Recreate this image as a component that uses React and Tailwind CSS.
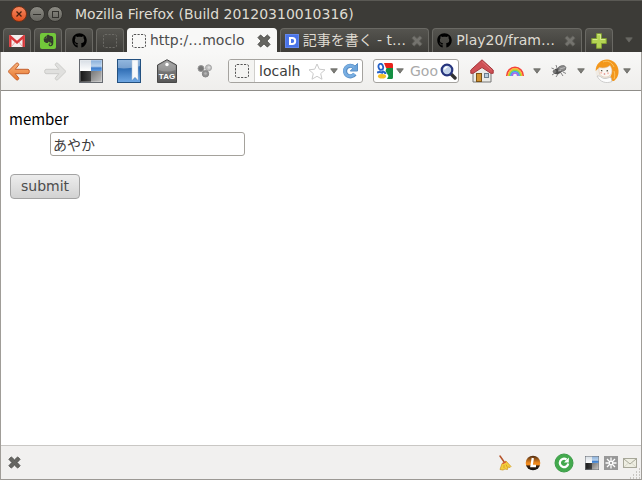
import { useState } from "react";
import { FaEvernote, FaGithub } from "react-icons/fa";

function CrossIcon({ size = 14, fill = "#666662", stroke = "#4a4a47" }) {
  return (
    <svg width={size} height={size} viewBox="0 0 14 14" aria-hidden>
      <path
        d="M3.600 1 7 4.200 10.400 1 13 3.600 9.800 7 13 10.400 10.400 13 7 9.800 3.600 13 1 10.400 4.200 7 1 3.600Z"
        fill={fill}
        stroke={stroke}
        strokeLinejoin="round"
      />
    </svg>
  );
}

function GmailIcon() {
  return (
    <svg width="16" height="12" viewBox="0 0 16 12" aria-hidden>
      <rect width="16" height="12" rx="1" fill="#f3efee" />
      <path d="M3 11 6.500 6.500M13 11 9.500 6.500" stroke="#e7a9a4" />
      <path d="M1.300 12V1.500L8 7.500l6.700-6V12" fill="none" stroke="#d8383a" strokeWidth="2.400" />
    </svg>
  );
}

function BlankPageIcon({ stroke = "#555" }) {
  return (
    <svg width="14" height="14" viewBox="0 0 14 14" aria-hidden>
      <rect x="0.500" y="0.500" width="13" height="13" rx="1.500" fill="none" stroke={stroke} strokeDasharray="2.200 1.300" />
    </svg>
  );
}

function DocIcon() {
  return (
    <svg width="14" height="14" viewBox="0 0 14 14" aria-hidden>
      <rect width="14" height="14" fill="#4a74e8" />
      <rect x="0.500" y="0.500" width="13" height="13" fill="none" stroke="#6288ee" />
      <path d="M5 4h2.200a3 3 0 0 1 0 6H5Z" fill="none" stroke="#fff" strokeWidth="2" />
    </svg>
  );
}

function ArrowIcon({ forward }) {
  return (
    <svg width="22" height="19" viewBox="0 0 22 19" className={forward ? "rotate-180" : ""} aria-hidden>
      <defs>
        <linearGradient id="backFill" x1="0" y1="0" x2="0" y2="1">
          <stop offset="0" stopColor="#f7b27c" />
          <stop offset="1" stopColor="#e8762c" />
        </linearGradient>
      </defs>
      <path
        d="M8.300 1.200c1-1 3.200.800 2.300 2L7.200 7.300H20c1.800 0 1.800 4.400 0 4.400H7.200l3.400 4.100c.9 1.200-1.300 3-2.300 2L.8 10.300c-.5-.500-.5-1.100 0-1.600Z"
        fill={forward ? "#e0e0de" : "url(#backFill)"}
        stroke={forward ? "#cbcbc8" : "#c4602c"}
      />
    </svg>
  );
}

function DeliciousIcon({ size = 24 }) {
  return (
    <svg width={size} height={size} viewBox="0 0 24 24" aria-hidden>
      <defs>
        <linearGradient id="delBlue" x1="0" y1="0" x2="0" y2="1">
          <stop offset="0" stopColor="#7fa9d8" />
          <stop offset="0.600" stopColor="#b9d2ec" />
          <stop offset="0.750" stopColor="#3d7ccb" />
          <stop offset="1" stopColor="#5e9be0" />
        </linearGradient>
        <linearGradient id="delGray" x1="0" y1="0" x2="1" y2="1">
          <stop offset="0" stopColor="#777" />
          <stop offset="1" stopColor="#c8c8c8" />
        </linearGradient>
        <linearGradient id="delWhite" x1="0" y1="0" x2="0" y2="1">
          <stop offset="0" stopColor="#d3dae2" />
          <stop offset="1" stopColor="#fff" />
        </linearGradient>
        <linearGradient id="delBlack" x1="0" y1="0" x2="1" y2="0">
          <stop offset="0" stopColor="#111" />
          <stop offset="1" stopColor="#444" />
        </linearGradient>
      </defs>
      <rect width="12" height="12" fill="url(#delWhite)" />
      <rect x="12" width="12" height="12" fill="url(#delBlue)" />
      <rect y="12" width="12" height="12" fill="url(#delBlack)" />
      <rect x="12" y="12" width="12" height="12" fill="url(#delGray)" />
      <rect x="0.500" y="0.500" width="23" height="23" fill="none" stroke="#666a70" />
      <rect x="1.500" y="1.500" width="21" height="21" fill="none" stroke="#fff" strokeOpacity="0.250" />
    </svg>
  );
}

function BookmarkIcon() {
  return (
    <svg width="24" height="24" viewBox="0 0 24 24" aria-hidden>
      <defs>
        <linearGradient id="bmBlue" x1="0" y1="0" x2="0" y2="1">
          <stop offset="0" stopColor="#5c94cf" />
          <stop offset="0.400" stopColor="#2f6db4" />
          <stop offset="1" stopColor="#73abe6" />
        </linearGradient>
      </defs>
      <rect width="24" height="24" fill="url(#bmBlue)" />
      <path d="M1 1h22v6C16 9 8 10 1 9Z" fill="#fff" fillOpacity="0.350" />
      <path d="M15 1h6v20l-3-3-3 3Z" fill="#f7f9fb" stroke="#b7c6d6" strokeWidth="0.500" />
      <rect x="0.500" y="0.500" width="23" height="23" fill="none" stroke="#23507f" />
    </svg>
  );
}

function TagIcon() {
  return (
    <svg width="20" height="24" viewBox="0 0 20 24" aria-hidden>
      <defs>
        <linearGradient id="tagFill" x1="0" y1="0" x2="0" y2="1">
          <stop offset="0" stopColor="#999" />
          <stop offset="1" stopColor="#555" />
        </linearGradient>
      </defs>
      <path d="M.500 6 10 .700 19.500 6v17.500H.500Z" fill="url(#tagFill)" stroke="#484848" />
      <path d="M1.500 6.500 10 2l8.500 4.500V11q-8 3-17 0Z" fill="#fff" fillOpacity="0.200" />
      <circle cx="10" cy="5.500" r="1.700" fill="#fff" />
      <text x="10" y="20" textAnchor="middle" fill="#fff" fontFamily="Liberation Sans, sans-serif" fontWeight="700" fontSize="8">
        TAG
      </text>
    </svg>
  );
}

function ClusterIcon() {
  return (
    <svg width="16" height="14" viewBox="0 0 16 14" aria-hidden>
      <circle cx="4" cy="4.500" r="3" fill="#777" stroke="#999" />
      <circle cx="11.500" cy="3.800" r="3" fill="#c0c0c0" stroke="#a5a5a5" />
      <circle cx="8.500" cy="9.800" r="3.200" fill="#929292" stroke="#858585" />
      <circle cx="12" cy="3.500" r="1.300" fill="#ddd" />
      <circle cx="8.500" cy="9.500" r="1.300" fill="#b5b5b5" />
    </svg>
  );
}

function StarIcon() {
  return (
    <svg width="18" height="17" viewBox="0 0 18 17" className="shrink-0" aria-hidden>
      <path
        d="m9 1 2.300 5.200 5.700.600-4.300 3.800 1.300 5.600L9 13.300l-5 2.900 1.300-5.600L1 6.800l5.700-.600Z"
        fill="#fff"
        stroke="#c9c9c9"
        strokeLinejoin="round"
      />
    </svg>
  );
}

function ReloadIcon() {
  return (
    <svg width="16" height="16" viewBox="0 0 16 16" className="shrink-0" aria-hidden>
      <path d="M12 4.200A5.300 5.300 0 1 0 12.800 11" fill="none" stroke="#5a8fc6" strokeWidth="4.200" />
      <path d="M15.500.500V8H8.300Z" fill="#6ea6dc" stroke="#5a8fc6" strokeLinejoin="round" />
      <path d="M12.200 4.800A5.300 5.300 0 1 0 12.400 10.800" fill="none" stroke="#78aee2" strokeWidth="2.600" />
    </svg>
  );
}

function GoogleIcon() {
  return (
    <svg width="16" height="16" viewBox="0 0 16 16" className="shrink-0" aria-hidden>
      <path d="M7 0h7.500a1.500 1.500 0 0 1 1.500 1.500V5H9Z" fill="#e8231c" />
      <path d="M9.500 5H16v9.500a1.500 1.500 0 0 1-1.500 1.500H10l1.500-3-3-5Z" fill="#149043" />
      <ellipse cx="3.800" cy="3.800" rx="2.300" ry="3" fill="#fff" stroke="#2461c9" strokeWidth="1.800" transform="rotate(-15 3.800 3.800)" />
      <path d="M5.500 7.500c0 1.500 3 1.500 3 3.500M0 9.500c2-1 4-.500 6 .500" fill="none" stroke="#2461c9" strokeWidth="2" />
      <ellipse cx="5" cy="13.300" rx="4" ry="2.300" fill="#f5c026" />
    </svg>
  );
}

function SearchIcon() {
  return (
    <svg width="17" height="17" viewBox="0 0 17 17" aria-hidden>
      <path d="m11.500 11.500 3.500 3.500" stroke="#333" strokeWidth="3.400" strokeLinecap="round" />
      <circle cx="7" cy="7" r="5.300" fill="#c3d3ea" stroke="#26357e" strokeWidth="2.200" />
      <path d="M4.500 6.500A3 3 0 0 1 7.500 4" stroke="#fff" fill="none" strokeWidth="1.500" />
    </svg>
  );
}

function HomeIcon() {
  return (
    <svg width="24" height="24" viewBox="0 0 24 24" aria-hidden>
      <path d="M3 12 12 4l9 8v11H3Z" fill="#ebebe7" stroke="#777" />
      <rect x="6.500" y="14.500" width="5" height="8" fill="#d39331" stroke="#7b5417" />
      <rect x="14.500" y="14.500" width="4" height="4" fill="#b9cddd" stroke="#6b7d8c" />
      <path d="M12 .800 23.200 11v3.300h-2.400L12 8.500l-8.800 5.800H.800V11Z" fill="#cf5055" stroke="#a3363a" strokeLinejoin="round" />
      <path d="M12 2.500 21.500 11" stroke="#e28084" strokeWidth="0.800" />
    </svg>
  );
}

function RainbowIcon() {
  return (
    <svg width="20" height="12" viewBox="0 0 20 12" aria-hidden>
      <g fill="none" strokeWidth="1.700">
        <path d="M1.800 11a8.200 8.600 0 0 1 16.400 0" stroke="#f5413b" />
        <path d="M3.300 11a6.700 7.100 0 0 1 13.400 0" stroke="#fbb62e" />
        <path d="M4.600 11a5.400 5.700 0 0 1 10.800 0" stroke="#8dd93d" />
        <path d="M5.900 11a4.100 4.400 0 0 1 8.200 0" stroke="#3fa5f0" />
        <path d="M7.200 11a2.800 3 0 0 1 5.600 0" stroke="#a766ea" />
      </g>
    </svg>
  );
}

function FlyIcon() {
  return (
    <svg width="16" height="14" viewBox="0 0 16 14" aria-hidden>
      <path d="M3 5 .500 4M4 9l-3 2M7 10l-2 3M10 9l2 3M6 4 5 1M12 8l3 1.500" stroke="#777" strokeWidth="0.900" />
      <ellipse cx="7" cy="7" rx="4.500" ry="2.800" fill="#505050" transform="rotate(-20 7 7)" />
      <ellipse cx="11" cy="4.500" rx="4" ry="2.800" fill="#8b8b8b" stroke="#666" strokeWidth="0.700" transform="rotate(-15 11 4.500)" />
      <circle cx="3.500" cy="7.500" r="1.800" fill="#777" />
      <path d="m9 5 5-1.500M7 7l3-.5" stroke="#ccc" strokeWidth="0.700" />
    </svg>
  );
}

function GirlIcon() {
  return (
    <svg width="24" height="24" viewBox="0 0 24 24" aria-hidden>
      <circle cx="12" cy="12" r="11.500" fill="#f0ebe4" />
      <path d="M.700 12C.500 5 6 .500 12 .500c6.500 0 11 5 11.500 11 .300 5-1.500 8-4.500 10.500-3 0-4-2-3.500-4.500 2-3 1.500-8-.5-10.500-3 2-8 3-11 2-1.500 1-2.300 2-3.300 3Z" fill="#f3971c" />
      <path d="M4 8.500c4 1 8 .500 11-2 2.500 3.500 2.500 7.500 0 10-3 2.500-8 2-10-1C4 13 3.800 11 4 8.500Z" fill="#fbf7f3" stroke="#d9bfa5" strokeWidth="0.600" />
      <path d="M8 3c4-2 9 0 11 5M19 12c1 3 1 5 0 8" stroke="#fbc25e" fill="none" />
      <path d="m6 11.500 1.300.300M11.500 12l1.500-.400" stroke="#443" strokeWidth="1.200" />
      <circle cx="6.200" cy="13.800" r="1" fill="#f7c0b4" />
      <circle cx="13" cy="14.200" r="1" fill="#f7c0b4" />
      <path d="M8.800 15h1.400" stroke="#d1544a" />
      <path d="M2 17c3-1 4 2 7 2.500s5-1.500 7-1l1 4C11 25 5 23 2 17Z" fill="#fdfdfd" stroke="#bbb" strokeWidth="0.700" />
    </svg>
  );
}

function Caret({ color = "#7d7d79", edge = "#64645f" }) {
  return (
    <svg width="8" height="6" viewBox="0 0 8 6" className="shrink-0" aria-hidden>
      <path d="M.700.800h6.600L4 5.200Z" fill={color} stroke={edge} strokeWidth="0.800" />
    </svg>
  );
}

function PlusIcon() {
  return (
    <svg width="16" height="16" viewBox="0 0 16 16" aria-hidden>
      <path d="M5.500.700h5v4.800h4.800v5h-4.800v4.800h-5v-4.800H.700v-5h4.800Z" fill="#b4d453" stroke="#7f9c34" />
      <path d="M6.500 1.700h3v4.800h4.800M1.700 6.500h4.800" stroke="#d7ec8d" fill="none" />
    </svg>
  );
}

function BroomIcon() {
  return (
    <svg width="16" height="16" viewBox="0 0 16 16" aria-hidden>
      <path d="m3 1 4.500 6.500" stroke="#b5532a" strokeWidth="1.500" strokeLinecap="round" />
      <path d="m5 8.500 4-2.500 5 5.500-1 1-2-.500-.5 2.500-2.500-.500-2 1-3-.500Z" fill="#f5ce3c" stroke="#cf9c2a" strokeWidth="0.800" />
      <path d="m5.500 8.800 3.500-2" stroke="#d8503c" strokeWidth="1.300" />
      <path d="M7 10v3M9 9.500l1.500 3" stroke="#cf9b20" strokeWidth="0.800" />
    </svg>
  );
}

function LeechIcon() {
  return (
    <svg width="16" height="16" viewBox="0 0 16 16" aria-hidden>
      <defs>
        <linearGradient id="orb" x1="0" y1="0" x2="0" y2="1">
          <stop offset="0" stopColor="#4d2a12" />
          <stop offset="0.500" stopColor="#f08a1d" />
          <stop offset="0.620" stopColor="#f08a1d" />
          <stop offset="0.700" stopColor="#3a2311" />
          <stop offset="1" stopColor="#111" />
        </linearGradient>
      </defs>
      <circle cx="8" cy="8" r="7.300" fill="url(#orb)" />
      <path d="M7.800 3 6.500 11H11" stroke="#fff" strokeWidth="2.300" fill="none" />
    </svg>
  );
}

function GreenReloadIcon() {
  return (
    <svg width="20" height="20" viewBox="0 0 20 20" aria-hidden>
      <circle cx="10" cy="10" r="9" fill="#43a94d" stroke="#3c9c48" />
      <path d="M12.500 6.500A4.200 4.200 0 1 0 14.200 10.500" fill="none" stroke="#fff" strokeWidth="2.200" />
      <path d="M14.800 4.500v5H10Z" fill="#fff" />
    </svg>
  );
}

function SnowflakeIcon() {
  return (
    <svg width="14" height="14" viewBox="0 0 14 14" aria-hidden>
      <rect width="14" height="14" fill="#989898" />
      <path d="M7 1.500v11M1.500 7h11M3 3l8 8M11 3l-8 8" stroke="#fff" strokeWidth="1.300" />
      <circle cx="7" cy="7" r="1.600" fill="#989898" stroke="#fff" />
    </svg>
  );
}

function MailIcon() {
  return (
    <svg width="14" height="10" viewBox="0 0 14 10" aria-hidden>
      <rect x="0.500" y="0.500" width="13" height="9" fill="#eeeee2" stroke="#a7a799" />
      <path d="m1 1 6 5 6-5" fill="none" stroke="#a7a799" />
      <path d="M1 9l4.500-4M13 9 8.500 5" stroke="#cfcfc2" strokeWidth="0.700" />
    </svg>
  );
}

const PINNED = [
  { id: "mail", label: "Gmail", icon: <GmailIcon /> },
  {
    id: "notes",
    label: "Evernote",
    icon: (
      <span className="flex size-4 items-center justify-center rounded-xs bg-[#72c83a] text-[#34382f]">
        <FaEvernote size={13} />
      </span>
    ),
  },
  { id: "github", label: "GitHub", icon: <FaGithub size={15} className="text-black" /> },
  { id: "blank", label: "Blank", icon: <BlankPageIcon stroke="#6b6a65" /> },
];

const TABS = [
  { id: "moclo", title: "http:/…moclo", icon: <BlankPageIcon /> },
  { id: "diary", title: "記事を書く - t…", icon: <DocIcon /> },
  { id: "play", title: "Play20/fram…", icon: <FaGithub size={15} className="text-black" /> },
];

const darkTab = "rounded-t-[4px] border border-b-0 border-[#6a6964] bg-linear-to-b from-[#55544f] to-[#3e3d39]";

function TitleBar() {
  return (
    <header className="flex h-7 items-center border-t border-[#5a5954] pb-px pl-[11px]">
      <div className="flex gap-[2px]">
        <button type="button" aria-label="Close" className="flex size-4 items-center justify-center rounded-full border border-[#7a2f12] bg-linear-to-b from-[#f5885f] to-[#e2501c]">
          <svg width="6" height="6" viewBox="0 0 6 6" aria-hidden>
            <path d="m.5.500 5 5M5.500.500l-5 5" stroke="#45200f" strokeWidth="1.300" />
          </svg>
        </button>
        <button type="button" aria-label="Minimize" className="flex size-4 items-center justify-center rounded-full border border-[#33322e] bg-linear-to-b from-[#8b8a83] to-[#66655f]">
          <span className="h-px w-2 bg-[#33322e]" />
        </button>
        <button type="button" aria-label="Maximize" className="flex size-4 items-center justify-center rounded-full border border-[#33322e] bg-linear-to-b from-[#8b8a83] to-[#66655f]">
          <span className="size-[7px] border border-[#33322e]" />
        </button>
      </div>
      <h1 className="ml-3 truncate text-[14px] text-[#dfdbd2]">Mozilla Firefox (Build 20120310010316)</h1>
    </header>
  );
}

function TabStrip({ activeId, onSelect }) {
  return (
    <nav className="flex h-6 items-stretch gap-[3px] pl-[3px]" aria-label="tabs">
      {PINNED.map((tab) => (
        <button key={tab.id} type="button" aria-label={tab.label} className={`flex w-7 shrink-0 items-center justify-center ${darkTab}`}>
          {tab.icon}
        </button>
      ))}
      {TABS.map((tab) => {
        const isActive = tab.id === activeId;
        return (
          <div
            key={tab.id}
            className={`flex min-w-0 flex-1 items-center px-1 ${
              isActive ? "rounded-t-[4px] border border-b-0 border-[#f8f8f7] bg-[#f8f8f7] text-[#4c4c4c]" : `${darkTab} text-[#dfdbd2]`
            }`}
          >
            <button type="button" onClick={() => onSelect(tab.id)} className="flex min-w-0 flex-1 items-center gap-1 text-left text-[14px]">
              <span className="shrink-0">{tab.icon}</span>
              <span className="truncate">{tab.title}</span>
            </button>
            <button type="button" aria-label={`Close ${tab.title}`} className="shrink-0 px-px">
              {isActive ? <CrossIcon /> : <CrossIcon size={12} fill="#74736e" stroke="#5f5e59" />}
            </button>
          </div>
        );
      })}
      <button type="button" aria-label="New tab" className={`flex w-7 shrink-0 items-center justify-center ${darkTab}`}>
        <PlusIcon />
      </button>
      <button type="button" aria-label="All tabs" className="flex w-[26px] shrink-0 items-center justify-center">
        <Caret color="#6a6965" />
      </button>
    </nav>
  );
}

function ToolButton({ label, className, children }) {
  return (
    <button type="button" aria-label={label} className={`flex h-7 shrink-0 items-center justify-center ${className}`}>
      {children}
    </button>
  );
}

function Toolbar() {
  return (
    <div className="flex h-[39px] items-center border-b border-[#8f8d89] bg-linear-to-b from-[#f8f8f7] to-[#efeeec]">
      <ToolButton label="Back" className="w-9"><ArrowIcon /></ToolButton>
      <ToolButton label="Forward" className="w-[35px]"><ArrowIcon forward /></ToolButton>
      <ToolButton label="Delicious" className="w-[38px]"><DeliciousIcon /></ToolButton>
      <ToolButton label="Bookmarks" className="w-[38px]"><BookmarkIcon /></ToolButton>
      <ToolButton label="Tag" className="w-[38px]"><TagIcon /></ToolButton>
      <ToolButton label="Share" className="w-[38px]"><ClusterIcon /></ToolButton>

      <div className="ml-1 flex h-6 min-w-0 flex-1 items-center overflow-hidden rounded-[3px] border border-[#a5a39f] bg-white">
        <span className="flex h-full w-[26px] shrink-0 items-center justify-center border-r border-[#d0cfcc] bg-[#f4f4f2]">
          <BlankPageIcon />
        </span>
        <input aria-label="Address" defaultValue="localh" className="ml-1 min-w-0 flex-1 text-[14px] text-[#3c3c3c] outline-none" />
        <button type="button" aria-label="Bookmark this page" className="shrink-0"><StarIcon /></button>
        <button type="button" aria-label="History" className="flex w-4 shrink-0 justify-center"><Caret /></button>
        <button type="button" aria-label="Reload" className="mr-1 shrink-0"><ReloadIcon /></button>
      </div>

      <div className="ml-[10px] flex h-6 w-[86px] shrink-0 items-center overflow-hidden rounded-[3px] border border-[#a5a39f] bg-white pl-[3px]">
        <button type="button" aria-label="Search engine" className="flex shrink-0 items-center gap-[3px]">
          <GoogleIcon />
          <Caret />
        </button>
        <input aria-label="Search" placeholder="Goo" className="ml-[6px] min-w-0 flex-1 text-[14px] placeholder:text-[#a9a9a9] outline-none" />
        <button type="button" aria-label="Go" className="mr-px shrink-0"><SearchIcon /></button>
      </div>

      <ToolButton label="Home" className="w-[46px]"><HomeIcon /></ToolButton>
      <ToolButton label="Rainbow" className="w-5"><RainbowIcon /></ToolButton>
      <ToolButton label="Rainbow menu" className="w-6"><Caret /></ToolButton>
      <ToolButton label="Firebug" className="w-5"><FlyIcon /></ToolButton>
      <ToolButton label="Firebug menu" className="w-6"><Caret /></ToolButton>
      <ToolButton label="Greasemonkey" className="w-7"><GirlIcon /></ToolButton>
      <ToolButton label="Greasemonkey menu" className="mr-2 w-3"><Caret /></ToolButton>
    </div>
  );
}

function MemberForm() {
  const [member, setMember] = useState("あやか");

  return (
    <form className="px-2 pt-4" onSubmit={(event) => event.preventDefault()}>
      <label htmlFor="member" className="block font-['Noto_Sans_CJK_JP',sans-serif] text-[15px] leading-6 text-black">
        member
      </label>
      <input
        id="member"
        value={member}
        onChange={(event) => setMember(event.target.value)}
        className="mt-px ml-[41px] block h-6 w-[195px] rounded-[3px] border border-[#a5a29c] bg-white px-[2px] text-[14px] text-[#3c3c3c] outline-none"
      />
      <button
        type="submit"
        className="mt-[18px] ml-px h-[25px] rounded-[4px] border border-[#a3a3a3] bg-linear-to-b from-[#ededed] to-[#d2d2d2] px-[10px] text-[14px] text-[#4c4c4c]"
      >
        submit
      </button>
    </form>
  );
}

function StatusBar() {
  return (
    <footer className="relative flex h-[35px] items-center border-t border-b border-t-[#c9c7c4] border-b-[#9b9894] bg-[#f1f0ef] pl-[7px]">
      <button type="button" aria-label="Close add-on bar"><CrossIcon size={13} /></button>
      <div className="ml-auto flex items-center">
        <ToolButton label="Clean" className="w-7"><BroomIcon /></ToolButton>
        <ToolButton label="Links" className="w-7"><LeechIcon /></ToolButton>
        <ToolButton label="Refresh" className="w-[34px]"><GreenReloadIcon /></ToolButton>
        <ToolButton label="Delicious" className="w-[22px]"><DeliciousIcon size={14} /></ToolButton>
        <ToolButton label="Snow" className="w-4"><SnowflakeIcon /></ToolButton>
        <ToolButton label="Mail" className="w-[22px]"><MailIcon /></ToolButton>
      </div>
      <svg width="11" height="11" viewBox="0 0 11 11" className="absolute right-0 bottom-0" aria-hidden>
        <path d="M9 1h1M9 4h1M6 4h1M9 7h1M6 7h1M3 7h1M9 10h1M6 10h1M3 10h1M0 10h1" stroke="#bab8b4" strokeWidth="1.500" />
      </svg>
    </footer>
  );
}

export default function App() {
  const [activeId, setActiveId] = useState("moclo");

  return (
    <div className="flex min-h-screen flex-col bg-[#3c3b37] font-['DejaVu_Sans','Noto_Sans_CJK_JP',sans-serif]">
      <TitleBar />
      <TabStrip activeId={activeId} onSelect={setActiveId} />
      <div className="flex flex-1 flex-col border-x border-[#a09d98] bg-white">
        <Toolbar />
        <main className="flex-1">
          <MemberForm />
        </main>
        <StatusBar />
      </div>
    </div>
  );
}
